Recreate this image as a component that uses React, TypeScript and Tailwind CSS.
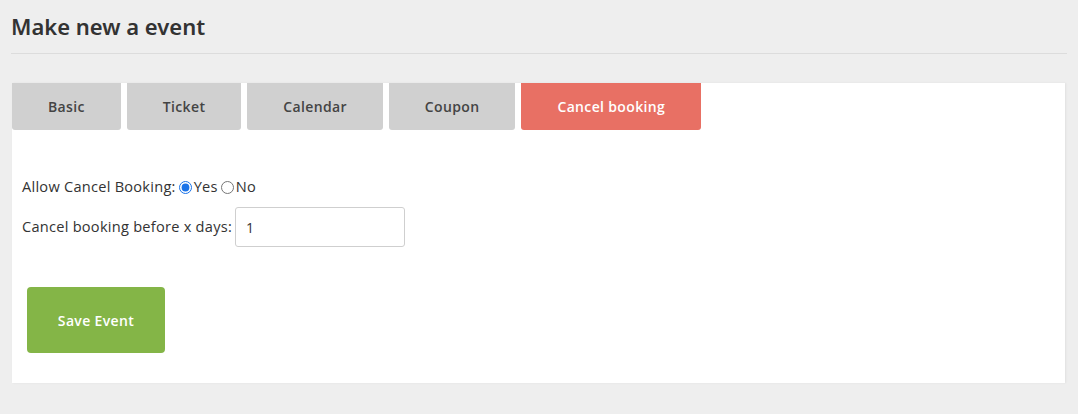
import React, { useState } from 'react';

const tabs = ['Basic', 'Ticket', 'Calendar', 'Coupon', 'Cancel booking'];

export default function App() {
  const [active] = useState('Cancel booking');
  const [allow, setAllow] = useState('yes');

  return (
    <div className="min-h-[414px] bg-[#eeeeee] pl-[11px] pt-[11px] pb-[31px] font-['Open_Sans',sans-serif]">
      {/* Title */}
      <h1 className="text-[22px] leading-[30px] font-semibold text-[#333] font-['Noto_Sans',sans-serif] pb-[12px] border-b border-[#dcdcdc] mr-[11px]">
        Make new a event
      </h1>

      {/* Panel */}
      <div className="mt-[29px] ml-px bg-white mr-[13px] h-[300px] shadow-[1px_0_2px_rgba(0,0,0,0.06)]">
        <div className="flex gap-[6px]">
          {tabs.map((tab) => (
            <button
              key={tab}
              className={
                tab === active
                  ? 'h-[47px] px-[36px] rounded-b-[3px] bg-[#e87064] text-white text-[14px] tracking-[0.35px] font-semibold'
                  : 'h-[47px] px-[36px] rounded-b-[3px] bg-[#d0d0d0] text-[#444] text-[14px] tracking-[0.35px] font-semibold'
              }
            >
              {tab}
            </button>
          ))}
        </div>

        <div className="pl-[10px] pt-[48px] text-[14.6px] tracking-[0.25px] text-[#333]">
          <div className="flex items-center h-[18px]">
            <span>Allow Cancel Booking:</span>
            <label className="flex items-center ml-[3px]">
              <input
                type="radio"
                name="allow"
                checked={allow === 'yes'}
                onChange={() => setAllow('yes')}
                className="w-[13px] h-[13px] m-0 mr-[2px] accent-[#1a73e8]"
              />
              Yes
            </label>
            <label className="flex items-center ml-[3px]">
              <input
                type="radio"
                name="allow"
                checked={allow === 'no'}
                onChange={() => setAllow('no')}
                className="w-[13px] h-[13px] m-0 mr-[2px]"
              />
              No
            </label>
          </div>

          <div className="flex items-center mt-[11px]">
            <span>Cancel booking before x days:</span>
            <input
              type="text"
              defaultValue="1"
              className="ml-[3px] w-[170px] h-[40px] border border-[#cfcfcf] rounded-[3px] px-[10px] text-[14px] text-[#333] outline-none"
            />
          </div>

          <button className="mt-[40px] ml-[5px] w-[138px] h-[66px] rounded-[4px] bg-[#84b547] text-white text-[14px] tracking-[0.35px] font-semibold">
            Save Event
          </button>
        </div>
      </div>
    </div>
  );
}
